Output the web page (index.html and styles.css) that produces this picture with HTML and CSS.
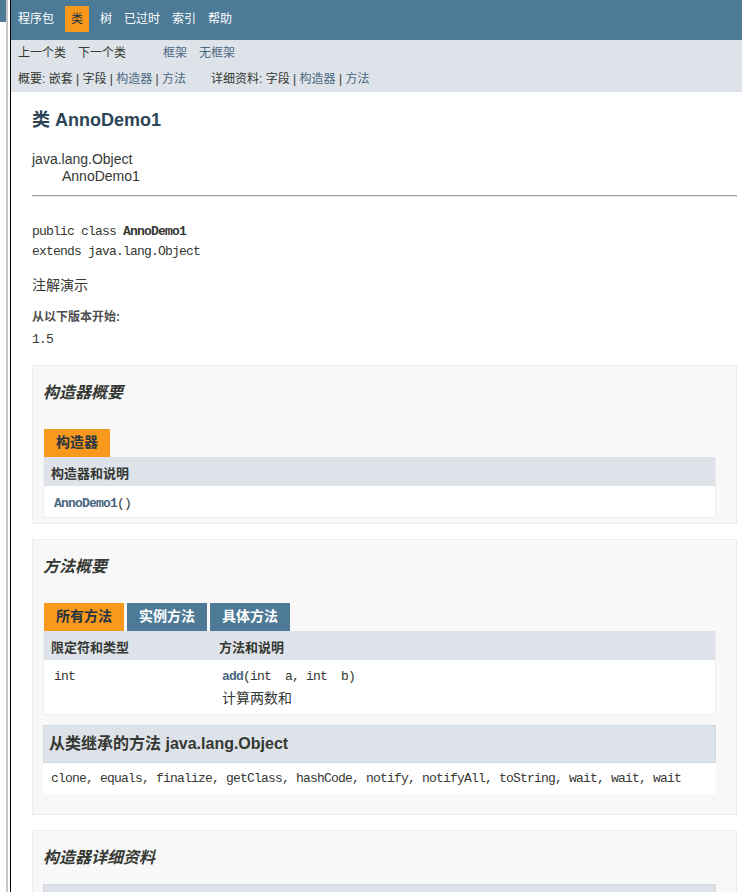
FILE: index.html
```html
<!DOCTYPE html>
<html lang="zh">
<head>
<meta charset="utf-8">
<title>AnnoDemo1</title>
<link rel="stylesheet" href="styles.css">
</head>
<body>
<div class="frame">
  <div class="side">
    <div class="side-a"><div class="side-top"></div></div>
    <div class="side-bar"></div>
    <div class="side-gap"></div>
  </div>
  <div class="main">
    <div class="topNav">
      <ul class="navList">
        <li><a href="#">程序包</a></li>
        <li class="active">类</li>
        <li><a href="#">树</a></li>
        <li><a href="#">已过时</a></li>
        <li><a href="#">索引</a></li>
        <li><a href="#">帮助</a></li>
      </ul>
    </div>
    <div class="subNav">
      <div class="subRow">
        <ul class="subList">
          <li>上一个类</li>
          <li>下一个类</li>
        </ul>
        <ul class="subList">
          <li><a href="#">框架</a></li>
          <li><a href="#">无框架</a></li>
        </ul>
      </div>
      <div class="subRow2">
        <ul class="subList2">
          <li>概要:&nbsp;</li>
          <li>嵌套&nbsp;|&nbsp;</li>
          <li>字段&nbsp;|&nbsp;</li>
          <li><a href="#">构造器</a>&nbsp;|&nbsp;</li>
          <li><a href="#">方法</a></li>
        </ul>
        <ul class="subList2">
          <li>详细资料:&nbsp;</li>
          <li>字段&nbsp;|&nbsp;</li>
          <li><a href="#">构造器</a>&nbsp;|&nbsp;</li>
          <li><a href="#">方法</a></li>
        </ul>
      </div>
    </div>

    <div class="header">
      <h2 class="title">类 AnnoDemo1</h2>
    </div>

    <div class="content">
      <ul class="inheritance">
        <li>java.lang.Object</li>
        <li>
          <ul class="inheritance nested">
            <li>AnnoDemo1</li>
          </ul>
        </li>
      </ul>

      <div class="description">
        <hr class="rule">
        <pre class="sig">public class <span class="typeName">AnnoDemo1</span>
extends java.lang.Object</pre>
        <div class="block">注解演示</div>
        <dl class="since">
          <dt>从以下版本开始:</dt>
          <dd>1.5</dd>
        </dl>
      </div>

      <section class="box">
        <h3 class="boxTitle">构造器概要</h3>
        <div class="tabs">
          <span class="tab active">构造器</span>
        </div>
        <table class="memberSummary">
          <tr><th class="colOne">构造器和说明</th></tr>
          <tr><td class="colOne"><code class="mono"><a class="memberName" href="#">AnnoDemo1</a>()</code></td></tr>
        </table>
      </section>

      <section class="box">
        <h3 class="boxTitle">方法概要</h3>
        <div class="tabs">
          <span class="tab active">所有方法</span>
          <span class="tab">实例方法</span>
          <span class="tab">具体方法</span>
        </div>
        <table class="memberSummary">
          <colgroup><col class="cFirst"><col></colgroup>
          <tr><th>限定符和类型</th><th>方法和说明</th></tr>
          <tr class="methodRow">
            <td><code class="mono">int</code></td>
            <td><code class="mono"><a class="memberName" href="#">add</a>(int&nbsp;&nbsp;a, int&nbsp;&nbsp;b)</code>
              <div class="block cellBlock">计算两数和</div></td>
          </tr>
        </table>
        <div class="inherited">
          <h3 class="inhTitle">从类继承的方法 java.lang.Object</h3>
          <code class="mono inhList">clone, equals, finalize, getClass, hashCode, notify, notifyAll, toString, wait, wait, wait</code>
        </div>
      </section>

      <section class="box">
        <h3 class="boxTitle">构造器详细资料</h3>
        <div class="detailItem">
          <div class="detailHead"></div>
        </div>
      </section>
    </div>
  </div>
</div>
</body>
</html>
```

FILE: styles.css
```css
html {
  overflow: hidden;
}

body {
  margin: 0;
  background: #ffffff;
  color: #353833;
  font-family: "Liberation Sans", "Noto Sans CJK SC", sans-serif;
  font-size: 14px;
}

a {
  color: #4A6782;
  text-decoration: none;
}

.frame {
  display: flex;
  min-height: 892px;
}

/* left frame remnant */
.side {
  width: 10px;
  flex-shrink: 0;
  display: flex;
}
.side-a {
  width: 6px;
}
.side-top {
  height: 22px;
  background: #4D7A97;
}
.side-bar {
  width: 2px;
  background: #c6c6c6;
}
.side-gap {
  width: 2px;
}

.main {
  flex: 1;
  min-width: 0;
  border-left: 1px solid #000000;
}

/* top navigation */
.topNav {
  background: #4D7A97;
  height: 40px;
  font-size: 12px;
}
.navList {
  display: flex;
  list-style: none;
  margin: 0;
  padding: 6px 0 0 1px;
}
.navList li {
  padding: 5px 6px;
  line-height: 16px;
  color: #ffffff;
}
.navList li a {
  color: #ffffff;
}
.navList li.active {
  background: #F8981D;
  color: #253441;
  margin: 0 5px;
}

/* sub navigation */
.subNav {
  background: #dee3e9;
  height: 52px;
  font-size: 12px;
}
.subRow {
  display: flex;
  padding-left: 1px;
}
.subList {
  display: flex;
  list-style: none;
  margin: 0 25px 0 0;
  padding: 0;
}
.subList li {
  padding: 5px 6px;
  line-height: 16px;
}
.subRow2 {
  display: flex;
  padding: 5px 0 5px 7px;
}
.subList2 {
  display: flex;
  list-style: none;
  margin: 0 25px 0 0;
  padding: 0;
  line-height: 16px;
}

/* header */
.header {
  margin: 0 20px 0 21px;
  padding-top: 5px;
}
.title {
  margin: 10px 0;
  font-size: 18px;
  font-weight: bold;
  line-height: 26px;
  color: #2c4557;
}

/* content */
.content {
  padding: 8px 5px 0 21px;
}

.inheritance {
  list-style: none;
  margin: 0;
  padding: 0;
  line-height: 17px;
}
.inheritance.nested {
  margin-left: 15px;
  padding-left: 15px;
}

.rule {
  border: 0;
  height: 0;
  border-top: 1px solid #9c9c9c;
  border-bottom: 1px solid #e6e6e6;
  margin: 10px 0 0 0;
}

.mono,
.sig {
  font-family: "Liberation Mono", "Noto Sans CJK SC", monospace;
  font-size: 13px;
  letter-spacing: -0.8px;
}
.mono {
  vertical-align: top;
}

.sig {
  margin: 25px 0 0 0;
  line-height: 20px;
}
.typeName {
  font-weight: bold;
}

.block {
  font-size: 14px;
  line-height: 20px;
  margin-top: 13px;
}

.since {
  margin: 14px 0 0 0;
}
.since dt {
  font-size: 12px;
  font-weight: bold;
  color: #4E4E4E;
  line-height: 16px;
}
.since dd {
  margin: 5px 0 0 0;
  font-family: "Liberation Mono", monospace;
  font-size: 13px;
  letter-spacing: -0.8px;
  line-height: 20px;
}

/* summary boxes */
.box {
  margin: 15px 0 0 0;
  padding: 0 20px 5px 10px;
  border: 1px solid #ededed;
  background: #f8f8f8;
}
.boxTitle {
  margin: 15px 0;
  font-size: 16px;
  font-style: italic;
  font-weight: bold;
  line-height: 23px;
}

.tabs {
  display: flex;
  gap: 3px;
  padding: 10px 0 0 1px;
}
.tab {
  padding: 5px 12px 7px;
  height: 16px;
  line-height: 16px;
  font-size: 14px;
  font-weight: bold;
  background: #4D7A97;
  color: #ffffff;
  white-space: nowrap;
}
.tab.active {
  background: #F8981D;
  color: #253441;
}

.memberSummary {
  width: 100%;
  table-layout: fixed;
  border-collapse: separate;
  border-spacing: 0;
  border-left: 1px solid #eeeeee;
  border-right: 1px solid #eeeeee;
  border-bottom: 1px solid #eeeeee;
}
col.cFirst {
  width: 168px;
}
.memberSummary th {
  background: #dee3e9;
  text-align: left;
  vertical-align: top;
  padding: 8px 3px 3px 7px;
  font-size: 13px;
  font-weight: bold;
  line-height: 18px;
}
.memberSummary td {
  background: #ffffff;
  text-align: left;
  vertical-align: top;
  padding: 8px 0 3px 10px;
  font-size: 13px;
  line-height: 20px;
  white-space: nowrap;
}
.memberName {
  font-weight: bold;
}
.methodRow td {
  padding-top: 7px;
  padding-bottom: 5px;
}
.cellBlock {
  margin-top: 0;
  line-height: 22px;
}

/* inherited methods */
.inherited {
  margin: 10px 0 0 0;
  padding: 0 0 5px 8px;
  background: #ffffff;
}
.inhTitle {
  margin: 0 0 6px -8px;
  padding: 7px 5px;
  background: #dee3e9;
  border: 1px solid #d0d9e0;
  font-size: 16px;
  font-weight: bold;
  font-style: normal;
  line-height: 22px;
}
.inhList {
  display: block;
  line-height: 20px;
  white-space: nowrap;
}
.box:has(.inherited) {
  padding-bottom: 20px;
}

/* details */
.detailItem {
  background: #ffffff;
  padding: 0 0 5px 8px;
}
.detailHead {
  margin: 0 0 6px -8px;
  height: 32px;
  background: #dee3e9;
  border: 1px solid #d0d9e0;
}
```
